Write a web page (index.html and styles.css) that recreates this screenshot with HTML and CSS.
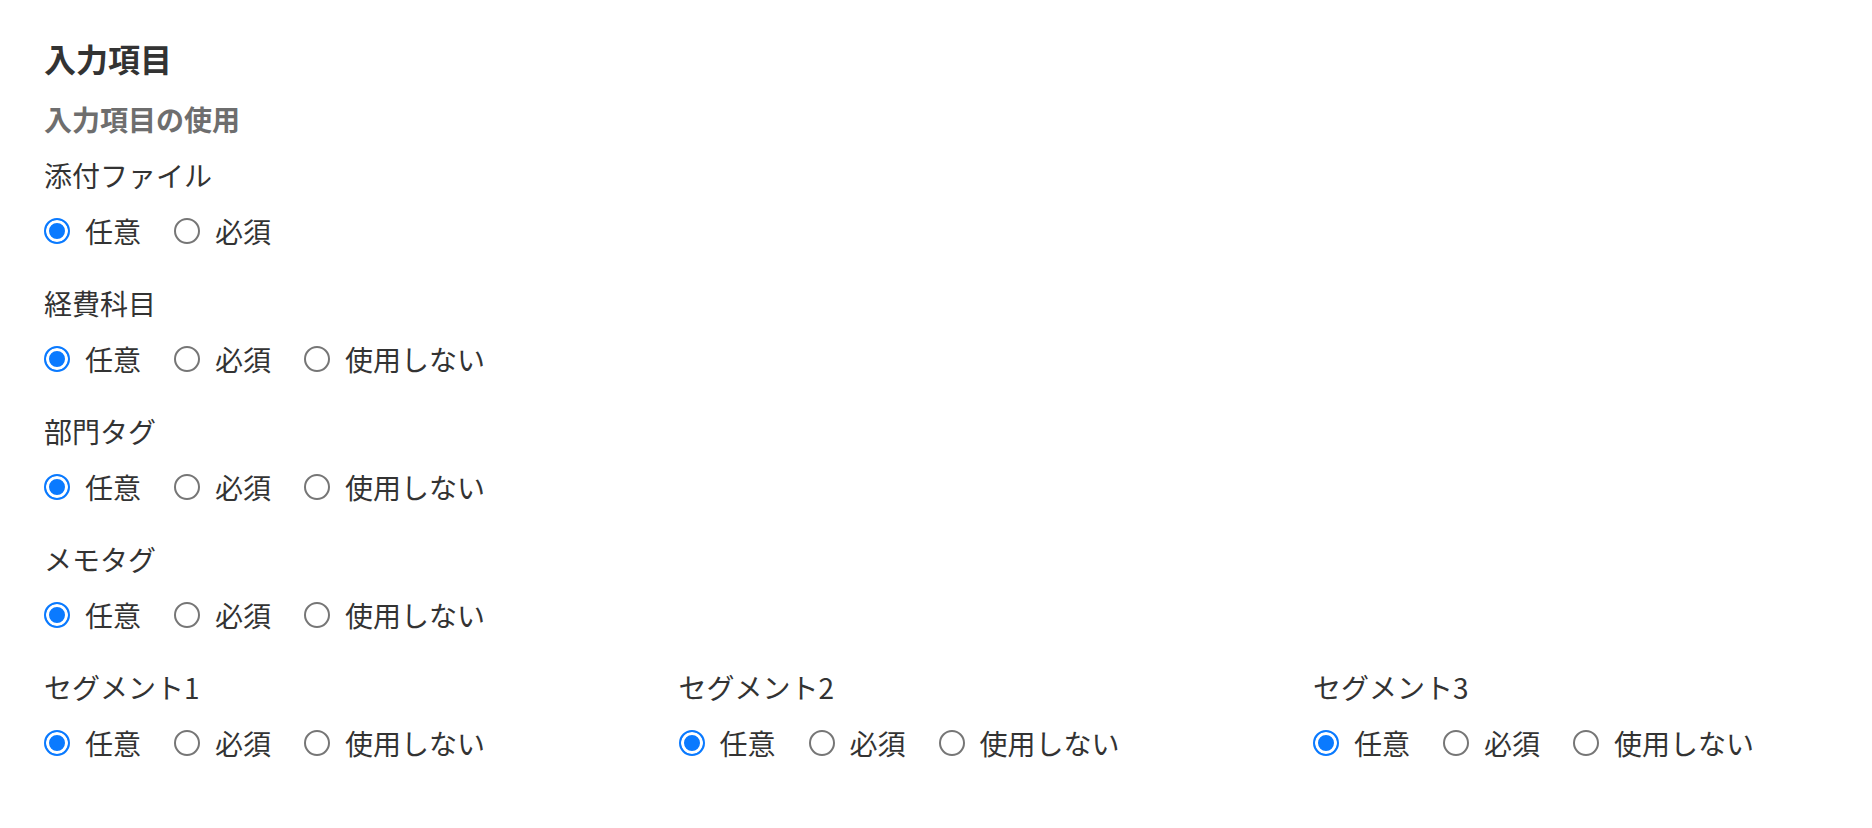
FILE: index.html
```html
<!DOCTYPE html>
<html lang="ja">
<head>
    <meta charset="UTF-8">
    <meta name="viewport" content="width=device-width, initial-scale=1.0">
    <title>入力項目</title>
    <link rel="stylesheet" href="styles.css">
</head>
<body>
    <main class="settings">
        <h2 class="settings-title">入力項目</h2>
        <h3 class="settings-subtitle">入力項目の使用</h3>

        <div class="field-group">
            <div class="field-label">添付ファイル</div>
            <div class="radio-row">
                <label class="radio-option"><input type="radio" name="attachment" checked>任意</label>
                <label class="radio-option"><input type="radio" name="attachment">必須</label>
            </div>
        </div>

        <div class="field-group">
            <div class="field-label">経費科目</div>
            <div class="radio-row">
                <label class="radio-option"><input type="radio" name="account" checked>任意</label>
                <label class="radio-option"><input type="radio" name="account">必須</label>
                <label class="radio-option"><input type="radio" name="account">使用しない</label>
            </div>
        </div>

        <div class="field-group">
            <div class="field-label">部門タグ</div>
            <div class="radio-row">
                <label class="radio-option"><input type="radio" name="section" checked>任意</label>
                <label class="radio-option"><input type="radio" name="section">必須</label>
                <label class="radio-option"><input type="radio" name="section">使用しない</label>
            </div>
        </div>

        <div class="field-group">
            <div class="field-label">メモタグ</div>
            <div class="radio-row">
                <label class="radio-option"><input type="radio" name="memo" checked>任意</label>
                <label class="radio-option"><input type="radio" name="memo">必須</label>
                <label class="radio-option"><input type="radio" name="memo">使用しない</label>
            </div>
        </div>

        <div class="segment-grid">
            <div class="field-group">
                <div class="field-label">セグメント1</div>
                <div class="radio-row">
                    <label class="radio-option"><input type="radio" name="segment1" checked>任意</label>
                    <label class="radio-option"><input type="radio" name="segment1">必須</label>
                    <label class="radio-option"><input type="radio" name="segment1">使用しない</label>
                </div>
            </div>
            <div class="field-group">
                <div class="field-label">セグメント2</div>
                <div class="radio-row">
                    <label class="radio-option"><input type="radio" name="segment2" checked>任意</label>
                    <label class="radio-option"><input type="radio" name="segment2">必須</label>
                    <label class="radio-option"><input type="radio" name="segment2">使用しない</label>
                </div>
            </div>
            <div class="field-group">
                <div class="field-label">セグメント3</div>
                <div class="radio-row">
                    <label class="radio-option"><input type="radio" name="segment3" checked>任意</label>
                    <label class="radio-option"><input type="radio" name="segment3">必須</label>
                    <label class="radio-option"><input type="radio" name="segment3">使用しない</label>
                </div>
            </div>
        </div>
    </main>
</body>
</html>
```

FILE: styles.css
```css
body {
    margin: 0;
    padding: 0;
    background-color: #fff;
    color: #333;
    font-family: "Noto Sans CJK JP", "Noto Sans", sans-serif;
    font-size: 28px;
    line-height: 42px;
}

.settings {
    padding: 34px 44px 0;
}

.settings-title {
    margin: 0 0 16px;
    font-size: 32px;
    line-height: 48px;
    font-weight: bold;
    color: #333;
}

.settings-subtitle {
    margin: 0 0 14px;
    font-size: 28px;
    line-height: 42px;
    font-weight: bold;
    color: #6e6e6e;
}

.field-group {
    margin-bottom: 30px;
}

.field-label {
    margin-bottom: 14px;
}

.radio-row {
    display: flex;
    align-items: center;
}

.radio-option {
    display: flex;
    align-items: center;
    margin-right: 33px;
    cursor: pointer;
}

.radio-option input {
    appearance: none;
    -webkit-appearance: none;
    box-sizing: border-box;
    width: 26px;
    height: 26px;
    margin: 0 15px 0 0;
    border: 2px solid #767676;
    border-radius: 50%;
    background-color: #fff;
}

.radio-option input:checked {
    border-color: #0a7aff;
    background-color: #0a7aff;
    box-shadow: inset 0 0 0 3px #fff;
}

.segment-grid {
    display: grid;
    grid-template-columns: 634.5px 634.5px 1fr;
}
```
